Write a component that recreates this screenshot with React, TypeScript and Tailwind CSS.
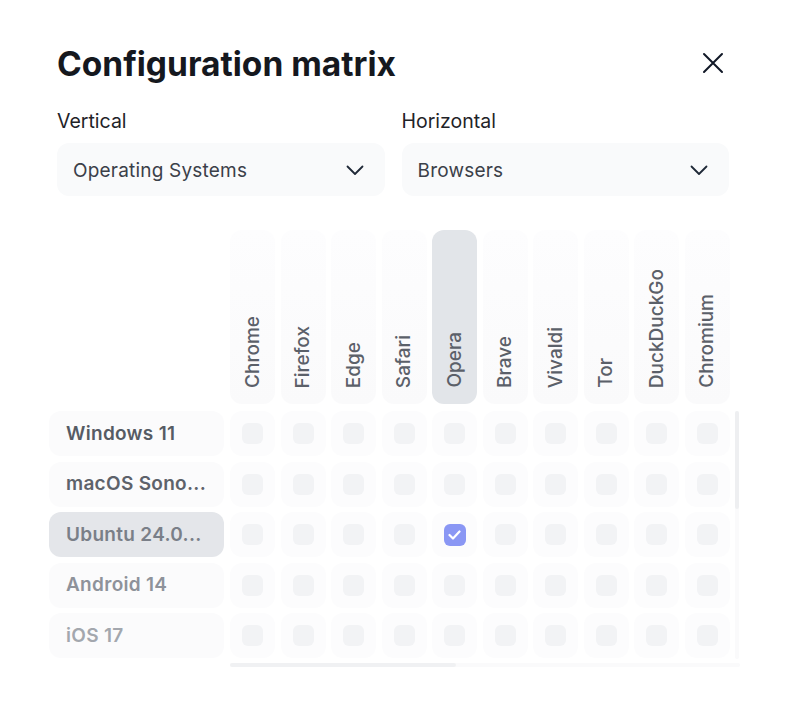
import { useState } from "react";

const browsers = ["Chrome", "Firefox", "Edge", "Safari", "Opera", "Brave", "Vivaldi", "Tor", "DuckDuckGo", "Chromium"];

const systems = [
  { name: "Windows 11", color: "text-[#565b64]" },
  { name: "macOS Sono...", color: "text-[#5d626b]" },
  { name: "Ubuntu 24.0...", color: "text-[#7a7f88]" },
  { name: "Android 14", color: "text-[#8e929a]" },
  { name: "iOS 17", color: "text-[#a3a7ae]" },
];

function Chevron() {
  return (
    <svg width="18" height="11" viewBox="0 0 18 11" fill="none" className="mt-[2px] shrink-0">
      <path d="M1.5 1.5L9 9L16.5 1.5" stroke="#1f2937" strokeWidth="1.8" strokeLinecap="round" strokeLinejoin="round" />
    </svg>
  );
}

function Select({ label, value }: { label: string; value: string }) {
  return (
    <div className="flex flex-1 flex-col gap-[10px]">
      <span className="text-[19.5px] leading-[24px] text-[#1f2328]">{label}</span>
      <button className="flex h-[53px] items-center justify-between rounded-xl bg-[#f9fafb] pl-4 pr-[21px] text-left">
        <span className="pt-[3px] text-[19px] tracking-[0.2px] text-[#3b4049]">{value}</span>
        <Chevron />
      </button>
    </div>
  );
}

export default function App() {
  const [checked] = useState("Ubuntu 24.0...:Opera");

  return (
    <div className="h-[728px] w-[786px] overflow-hidden bg-white font-['Inter',sans-serif]">
      <div className="px-[57px] pt-[44px]">
        <div className="flex items-center justify-between">
          <h1 className="text-[33.5px] font-bold leading-[40px] text-[#15181e]">Configuration matrix</h1>
          <svg width="22" height="22" viewBox="0 0 22 22" fill="none" className="mr-[5px] mt-[-3px]">
            <path d="M2 2L20 20M20 2L2 20" stroke="#111827" strokeWidth="2" strokeLinecap="round" />
          </svg>
        </div>

        <div className="mt-[25px] flex gap-[17px]">
          <Select label="Vertical" value="Operating Systems" />
          <Select label="Horizontal" value="Browsers" />
        </div>

        <div className="relative -ml-2 mt-[34px]">
          <div className="flex gap-[6px]">
            <div className="w-[175px] shrink-0" />
            <div className="flex gap-[5.5px]">
              {browsers.map((b) => (
                <div
                  key={b}
                  className={
                    "flex h-[174px] w-[45px] items-end justify-center rounded-xl pb-[16px] " +
                    (b === "Opera" ? "bg-[#e2e5e9]" : "bg-gradient-to-b from-[#fdfdfe] to-[#fafafb]")
                  }
                >
                  <span className="whitespace-nowrap text-[19px] font-medium leading-[20px] text-[#5b6069] [writing-mode:vertical-rl] rotate-180">
                    {b}
                  </span>
                </div>
              ))}
            </div>
          </div>

          <div className="mt-[7px] flex flex-col gap-[5.5px]">
            {systems.map((s) => (
              <div key={s.name} className="flex gap-[6px]">
                <div
                  className={
                    "flex h-[45px] w-[175px] shrink-0 items-center rounded-xl px-[17px] " +
                    (s.name === "Ubuntu 24.0..." ? "bg-[#e4e6ea]" : "bg-[#fbfbfc]")
                  }
                >
                  <span className={"whitespace-nowrap pt-[1px] text-[19px] font-semibold tracking-[0.3px] " + s.color}>{s.name}</span>
                </div>
                <div className="flex gap-[5.5px]">
                  {browsers.map((b) => {
                    const on = checked === `${s.name}:${b}`;
                    return (
                      <div key={b} className="flex h-[45px] w-[45px] items-center justify-center rounded-xl bg-[#fcfcfd]">
                        {on ? (
                          <div className="flex h-[22px] w-[22px] items-center justify-center rounded-[6px] bg-[#8a97f4]">
                            <svg width="13" height="10" viewBox="0 0 13 10" fill="none">
                              <path d="M1.5 5L5 8.5L11.5 1.5" stroke="white" strokeWidth="2.2" strokeLinecap="round" strokeLinejoin="round" />
                            </svg>
                          </div>
                        ) : (
                          <div className="h-[21px] w-[21px] rounded-[6px] bg-[#f2f3f5]" />
                        )}
                      </div>
                    );
                  })}
                </div>
              </div>
            ))}
          </div>

          {/* scrollbars */}
          <div className="absolute left-[686px] top-[181px] h-[248px] w-[4px] rounded-full bg-[#fafafb]">
            <div className="h-[98px] w-[4px] rounded-full bg-[#eeeff1]" />
          </div>
          <div className="absolute left-[181px] top-[433px] h-[4px] w-[510px] rounded-full bg-[#fafafb]">
            <div className="h-[4px] w-[226px] rounded-full bg-[#f0f1f3]" />
          </div>
        </div>
      </div>
    </div>
  );
}
